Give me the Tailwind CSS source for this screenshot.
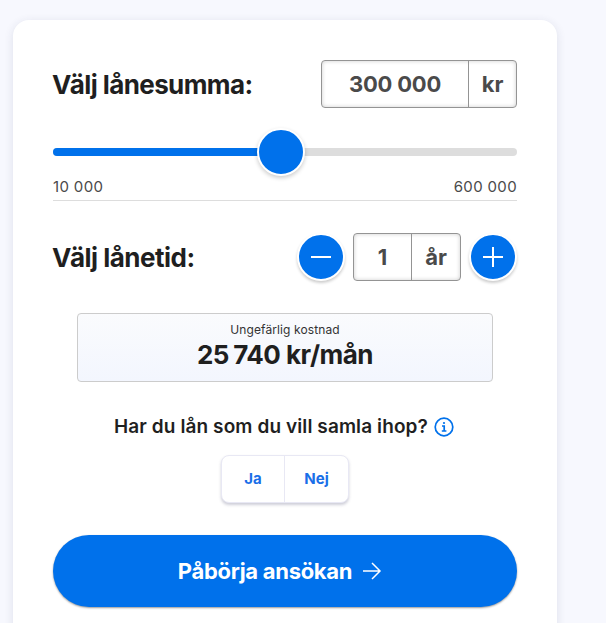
<!DOCTYPE html>
<html lang="sv">
<head>
<meta charset="utf-8">
<script src="https://cdn.jsdelivr.net/npm/@tailwindcss/browser@4"></script>
</head>
<body class="bg-[#f7f8fe] font-['Inter','Liberation_Sans',sans-serif] overflow-hidden h-[623px]">
<div class="ml-[13px] mt-5 w-[544px] h-[640px] bg-white rounded-[16px] shadow-[0_2px_10px_rgba(40,50,90,0.12)] px-10 pt-10">
  <div class="flex items-center justify-between h-12">
    <h2 class="-ml-px text-[26px] font-bold tracking-[-0.6px] text-[#1f1f1f]">Välj lånesumma:</h2>
    <div class="flex w-[196px] h-12 rounded-[4px] border border-[#949494] shadow-[inset_0_0_4px_rgba(0,0,0,0.2)] text-[#4a4a4a] font-bold text-[22px] tracking-[-0.2px]">
      <div class="w-[147px] flex items-center justify-center border-r border-[#949494]">300 000</div>
      <div class="flex-1 flex items-center justify-center">kr</div>
    </div>
  </div>
  <div class="relative mt-10 h-2 rounded-full bg-[#dddddd]">
    <div class="h-2 w-[228px] rounded-full bg-[#0071eb]"></div>
    <div class="absolute left-[204px] top-[-20px] w-12 h-12 rounded-full bg-[#0071eb] border-2 border-white shadow-[0_2px_4px_rgba(0,0,0,0.2)]"></div>
  </div>
  <div class="flex justify-between mt-[22px] pb-[5px] border-b border-[#dddddd] text-[15px] tracking-[0.35px] leading-[17px] text-[#4a4a4a]">
    <span>10 000</span><span>600 000</span>
  </div>
  <div class="flex items-center justify-between mt-8 h-12">
    <h2 class="-ml-px text-[26px] font-bold tracking-[-0.5px] text-[#1f1f1f]">Välj lånetid:</h2>
    <div class="flex items-center gap-2">
      <button class="w-12 h-12 rounded-full bg-[#0071eb] border-2 border-white shadow-[0_2px_3px_rgba(0,0,0,0.2)] flex items-center justify-center">
        <svg width="24" height="24" viewBox="0 0 24 24" fill="none" stroke="white" stroke-width="2"><path d="M2 12h20"/></svg>
      </button>
      <div class="flex w-[108px] h-12 rounded-[4px] border border-[#949494] shadow-[inset_0_0_4px_rgba(0,0,0,0.2)] text-[#4a4a4a] font-bold text-[22px]">
        <div class="w-[58px] flex items-center justify-center border-r border-[#949494]">1</div>
        <div class="flex-1 flex items-center justify-center">år</div>
      </div>
      <button class="w-12 h-12 rounded-full bg-[#0071eb] border-2 border-white shadow-[0_2px_3px_rgba(0,0,0,0.2)] flex items-center justify-center">
        <svg width="24" height="24" viewBox="0 0 24 24" fill="none" stroke="white" stroke-width="2"><path d="M2 12h20M12 2v20"/></svg>
      </button>
    </div>
  </div>
  <div class="mx-6 mt-8 h-[69px] rounded-[4px] border border-[#cccccc] bg-gradient-to-b from-[#fafbfd] to-[#f3f6fe] flex flex-col items-center pt-[9px]">
    <div class="text-[12px] tracking-[0.1px] leading-[14px] text-[#333333]">Ungefärlig kostnad</div>
    <div class="text-[26px] leading-[30px] mt-[3px] font-bold tracking-[-0.5px] text-[#1f1f1f]"><span class="[word-spacing:-1.5px]">25 740</span> kr/mån</div>
  </div>
  <div class="flex items-center justify-center gap-[6px] mt-[33px] mr-[2px] h-6 text-[19px] font-semibold tracking-[0.1px] text-[#1f1f1f]">
    <span>Har du lån som du vill samla ihop?</span>
    <svg width="20" height="20" viewBox="0 0 20 20" fill="none" stroke="#0071eb"><circle cx="10" cy="10" r="8.8" stroke-width="1.7"/><path d="M8 9h2.2v5M7.8 14h4.6" stroke-width="1.7"/><circle cx="10" cy="6" r="1.1" fill="#0071eb" stroke="none"/></svg>
  </div>
  <div class="mx-auto mt-4 flex w-32 h-12 rounded-[8px] border border-[#e8e8f4] shadow-[0_2px_3px_rgba(60,60,100,0.25)] bg-white text-[15px] font-bold text-[#1a6fe8]">
    <button class="w-[63px] border-r border-[#e8e8f4]">Ja</button>
    <button class="flex-1">Nej</button>
  </div>
  <button class="mt-8 w-full h-[72px] pr-[10px] rounded-[36px] bg-[#0071eb] shadow-[0_1px_2px_rgba(0,0,0,0.4)] flex items-center justify-center gap-[10px] text-white text-[22px] font-bold tracking-[-0.3px]">
    <span>Påbörja ansökan</span>
    <svg width="20" height="20" viewBox="0 0 20 20" fill="none" stroke="white" stroke-width="1.5"><path d="M1 10h17M10 2l8 8-8 8"/></svg>
  </button>
</div>
</body>
</html>
